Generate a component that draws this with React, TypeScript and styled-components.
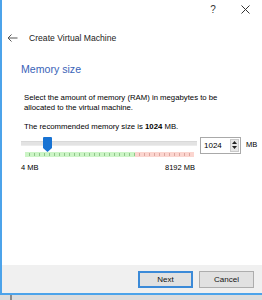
import styled, { createGlobalStyle } from 'styled-components'

const GlobalStyle = createGlobalStyle`
    html, body {
        margin: 0;
        padding: 0;
        background: #ffffff;
        overflow: hidden;
    }
`

const Screen = styled.div`
    width: 262px;
    height: 300px;
    display: flex;
    flex-direction: column;
    font-family: 'Liberation Sans', Arial, sans-serif;
    color: #000;
`

const Dialog = styled.div`
    height: 295px;
    display: flex;
    flex-direction: column;
    border-left: 2px solid #4ca3ea;
    border-bottom: 2px solid #4ca3ea;
    box-sizing: border-box;
    background: #fff;
`

const TitleBar = styled.div`
    height: 19px;
    display: flex;
    justify-content: flex-end;
    align-items: center;
    gap: 22px;
    padding: 0 12px 0 0;
    font-size: 10px;
    color: #333;
`

const CaptionButton = styled.span`
    display: flex;
    align-items: center;
    justify-content: center;
    width: 10px;
`

const Header = styled.div`
    height: 38px;
    display: flex;
    align-items: center;
    gap: 11px;
    padding: 0 0 0 5px;
    font-size: 8.6px;
    color: #222;
`

const Body = styled.div`
    flex: 1;
    display: flex;
    flex-direction: column;
    padding: 5px 0 0 19px;
`

const Heading = styled.h1`
    margin: 0;
    font-size: 10.6px;
    font-weight: normal;
    color: #3a63b8;
    line-height: 14px;
`

const Paragraph = styled.p`
    margin: ${({ $top }: { $top: number }) => $top}px 0 0 3px;
    font-size: 7.75px;
    line-height: 9.5px;
    width: 205px;
`

const SliderRow = styled.div`
    display: flex;
    align-items: flex-start;
    margin-top: 5px;
`

const SliderColumn = styled.div`
    width: 176px;
    display: flex;
    flex-direction: column;
`

const TrackArea = styled.div`
    position: relative;
    height: 14px;
    display: flex;
    align-items: center;
`

const Track = styled.div`
    width: 100%;
    height: 3px;
    background: #e3e3e3;
    border-top: 1px solid #d8d8d8;
    border-bottom: 1px solid #ececec;
`

const Thumb = styled.svg`
    position: absolute;
    top: 0;
`

const Ticks = styled.div`
    margin: 1px 3px 0 4px;
    height: 5px;
    display: flex;
`

const TickZone = styled.div<{ $fill: string; $tick: string; $grow: number }>`
    flex: ${({ $grow }) => $grow};
    background:
        repeating-linear-gradient(90deg, transparent 0 4px, ${({ $tick }) => $tick} 4px 5px) 0 1px / 100% 3px no-repeat,
        ${({ $fill }) => $fill};
`

const Scale = styled.div`
    display: flex;
    justify-content: space-between;
    margin-top: 6px;
    padding-right: 2px;
    font-size: 7.5px;
`

const SpinBox = styled.div`
    margin-left: 3px;
    width: 41px;
    height: 17px;
    box-sizing: border-box;
    border: 1px solid #a9a9a9;
    display: flex;
    align-items: center;
    justify-content: space-between;
    padding: 0 1px 0 3px;
    font-size: 8px;
`

const SpinButtons = styled.div`
    width: 9px;
    height: 13px;
    background: #e6e6e6;
    border: 1px solid #c9c9c9;
    box-sizing: border-box;
    display: flex;
    flex-direction: column;
    align-items: center;
    justify-content: space-evenly;
`

const Unit = styled.span`
    margin: 3px 0 0 5px;
    font-size: 7.5px;
`

const Footer = styled.div`
    height: 28px;
    background: #f0f0f0;
    display: flex;
    justify-content: flex-end;
    align-items: center;
    gap: 6px;
    padding: 0 8px 0 0;
`

const Button = styled.button<{ $default?: boolean }>`
    width: 55px;
    height: 17px;
    box-sizing: border-box;
    padding: 0;
    background: #e1e1e1;
    border: ${({ $default }) => ($default ? '2px solid #3b8ad8' : '1px solid #adadad')};
    font-family: 'Liberation Sans', Arial, sans-serif;
    font-size: 8px;
    color: #111;
`

const Backdrop = styled.div`
    flex: 1;
    background: #dcdcdc;
    display: flex;
    padding-left: 10px;
`

const BackdropBar = styled.div`
    width: 2px;
    background: #8a8a8a;
`

const App = () => {
    return (
        <Screen>
            <GlobalStyle />
            <Dialog>
                <TitleBar>
                    <CaptionButton>?</CaptionButton>
                    <CaptionButton>
                        <svg width='9' height='9' viewBox='0 0 9 9'>
                            <path d='M0.5 0.5 L8.5 8.5 M8.5 0.5 L0.5 8.5' stroke='#333' strokeWidth='1' />
                        </svg>
                    </CaptionButton>
                </TitleBar>
                <Header>
                    <svg width='11' height='8' viewBox='0 0 11 8'>
                        <path d='M10.5 4 H1 M4.5 0.5 L1 4 L4.5 7.5' stroke='#555' strokeWidth='1' fill='none' />
                    </svg>
                    <span>Create Virtual Machine</span>
                </Header>
                <Body>
                    <Heading>Memory size</Heading>
                    <Paragraph $top={17}>
                        Select the amount of memory (RAM) in megabytes to be allocated to the virtual machine.
                    </Paragraph>
                    <Paragraph $top={10}>
                        The recommended memory size is <b>1024</b> MB.
                    </Paragraph>
                    <SliderRow>
                        <SliderColumn>
                            <TrackArea>
                                <Track />
                                <Thumb width='9' height='15' viewBox='0 0 9 15' style={{ left: 22 }}>
                                    <path d='M0 1 Q0 0 1 0 H8 Q9 0 9 1 V11 L4.5 15 L0 11 Z' fill='#1873d3' />
                                </Thumb>
                            </TrackArea>
                            <Ticks>
                                <TickZone $grow={109} $fill='#ccf5c6' $tick='#8fc48a' />
                                <TickZone $grow={59} $fill='#fbd5cf' $tick='#dca59e' />
                            </Ticks>
                            <Scale>
                                <span>4 MB</span>
                                <span>8192 MB</span>
                            </Scale>
                        </SliderColumn>
                        <SpinBox>
                            <span>1024</span>
                            <SpinButtons>
                                <svg width='5' height='3' viewBox='0 0 5 3'>
                                    <path d='M0 3 L2.5 0 L5 3 Z' fill='#222' />
                                </svg>
                                <svg width='5' height='3' viewBox='0 0 5 3'>
                                    <path d='M0 0 L2.5 3 L5 0 Z' fill='#222' />
                                </svg>
                            </SpinButtons>
                        </SpinBox>
                        <Unit>MB</Unit>
                    </SliderRow>
                </Body>
                <Footer>
                    <Button $default>Next</Button>
                    <Button>Cancel</Button>
                </Footer>
            </Dialog>
            <Backdrop>
                <BackdropBar />
            </Backdrop>
        </Screen>
    )
}

export default App
